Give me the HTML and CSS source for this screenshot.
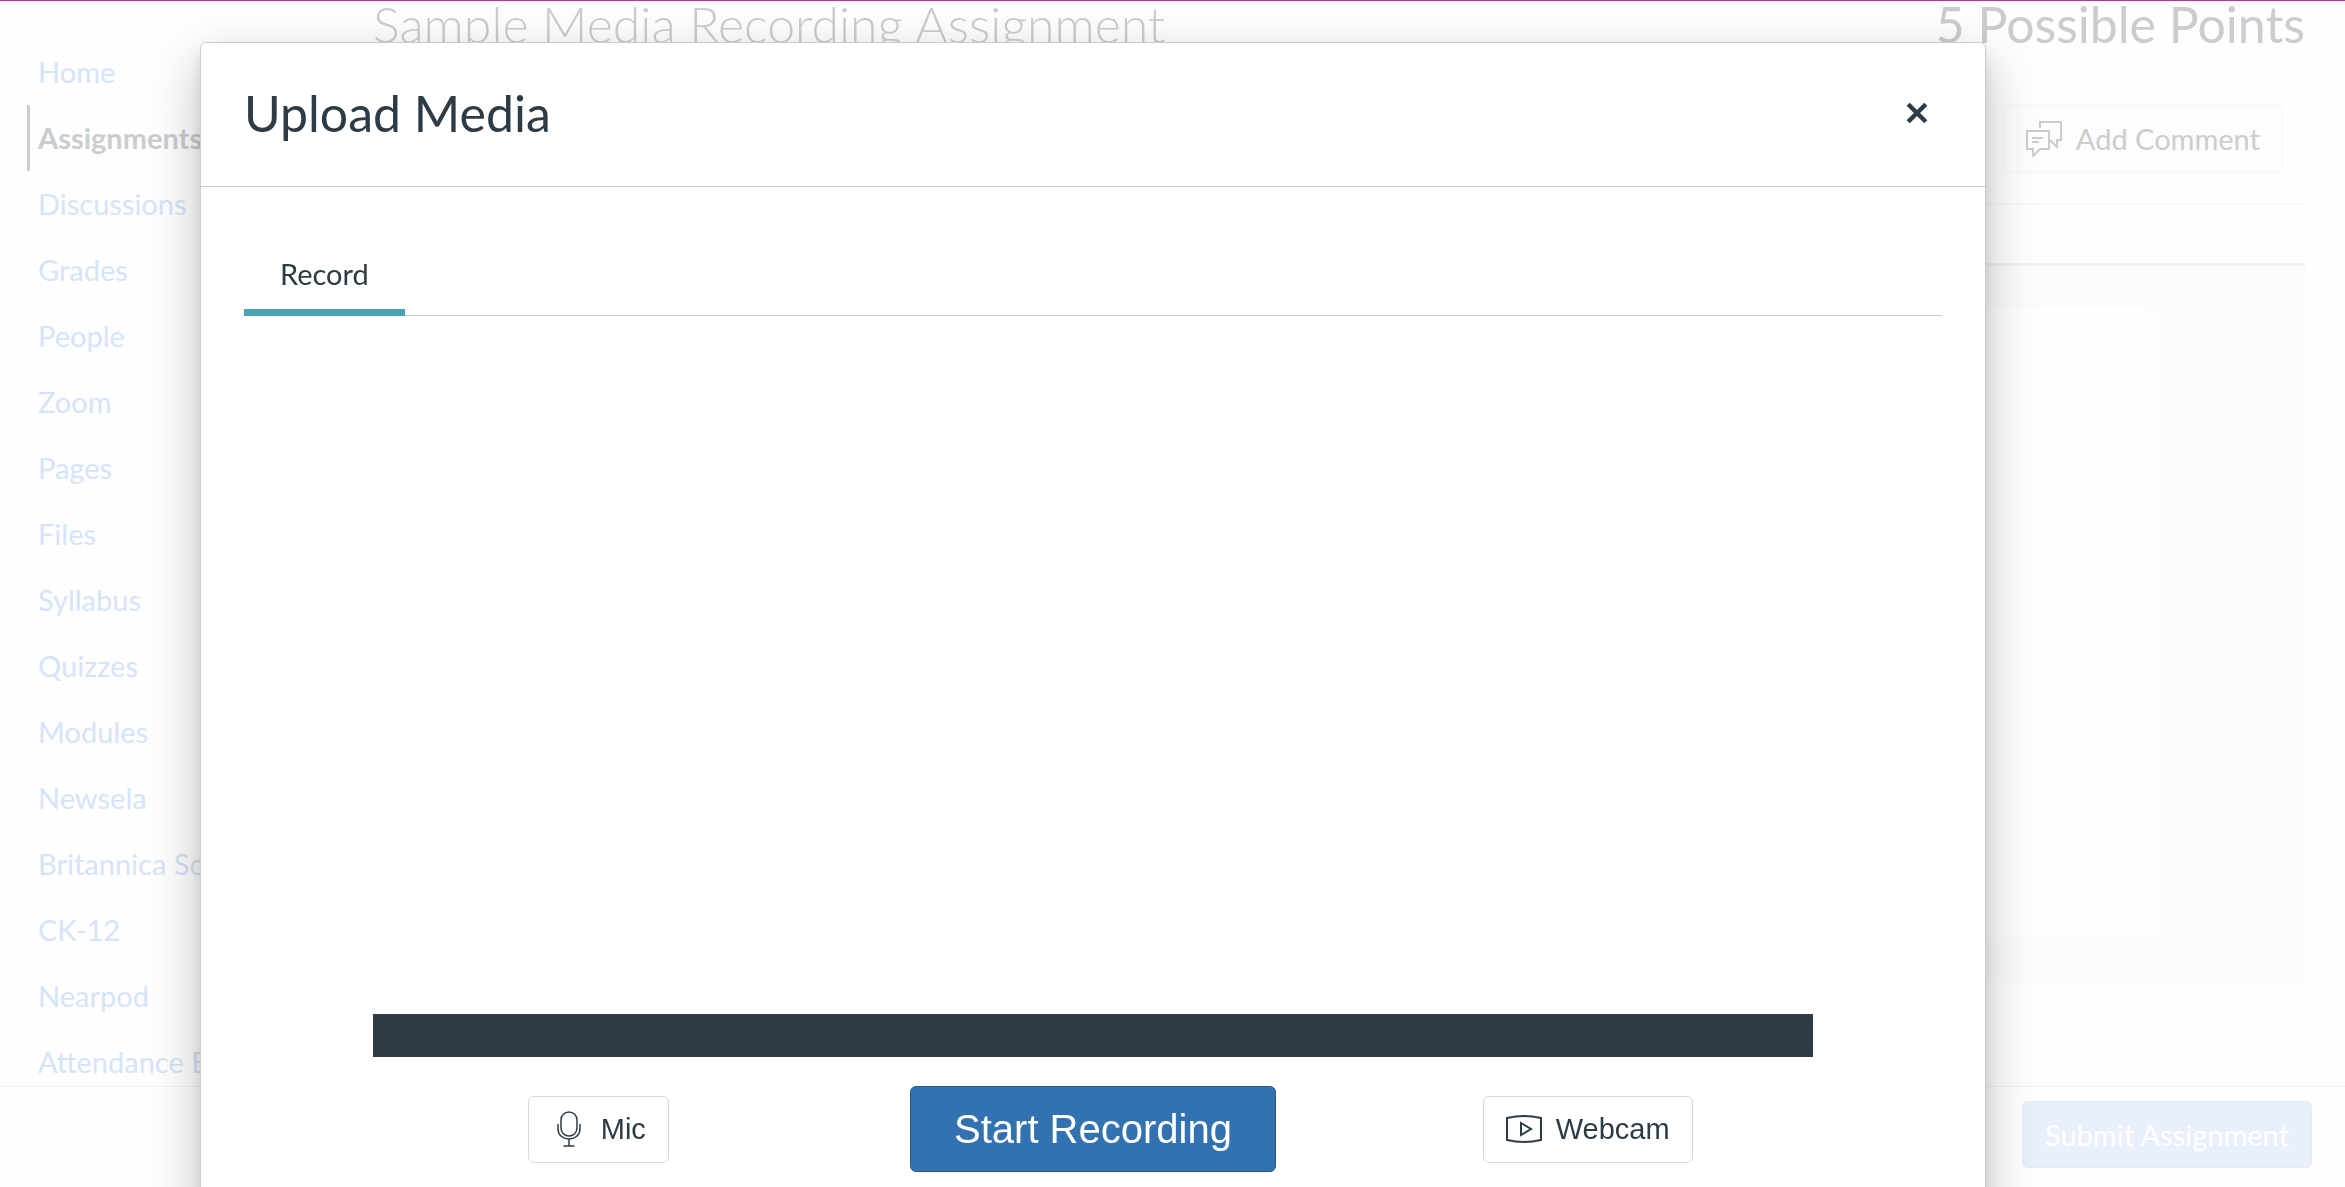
FILE: index.html
```html
<!DOCTYPE html>
<html lang="en">
<head>
    <meta charset="UTF-8">
    <title>Sample Media Recording Assignment</title>
    <link rel="stylesheet" href="styles.css">
</head>
<body>
<div class="page">
    <nav class="nav">
        <a href="#">Home</a>
        <a href="#" class="active">Assignments</a>
        <a href="#">Discussions</a>
        <a href="#">Grades</a>
        <a href="#">People</a>
        <a href="#">Zoom</a>
        <a href="#">Pages</a>
        <a href="#">Files</a>
        <a href="#">Syllabus</a>
        <a href="#">Quizzes</a>
        <a href="#">Modules</a>
        <a href="#">Newsela</a>
        <a href="#">Britannica School</a>
        <a href="#">CK-12</a>
        <a href="#">Nearpod</a>
        <a href="#">Attendance B</a>
    </nav>
    <main class="content">
        <div class="heading">
            <h1 class="title">Sample Media Recording Assignment</h1>
            <span class="points">5 Possible Points</span>
        </div>
        <div class="toolbar">
            <button type="button" class="comment">
                <svg width="36" height="36" viewBox="0 0 36 36" fill="none" stroke="currentColor" stroke-width="2">
                    <path d="M14 7V1h21v18h-4v7l-7-7"/>
                    <path d="M1 10h22v18h-9l-7 7v-7H1zM6 17h11M6 21h7"/>
                </svg>
                Add Comment
            </button>
        </div>
        <div class="tab-row"></div>
        <div class="attempt">
            <div class="attempt-card"></div>
        </div>
    </main>
</div>
<footer class="footer">
    <button type="button" class="submit">Submit Assignment</button>
</footer>

<div class="modal" role="dialog" aria-labelledby="modal-title">
    <header class="modal-header">
        <h2 class="modal-title" id="modal-title">Upload Media</h2>
        <button type="button" class="close" aria-label="Close">
            <svg width="22" height="22" viewBox="0 0 20 20" stroke="currentColor" stroke-width="4">
                <path d="M2 2l16 16M18 2L2 18"/>
            </svg>
        </button>
    </header>
    <div class="modal-body">
        <div class="tabs" role="tablist">
            <button type="button" class="tab" role="tab" aria-selected="true">Record</button>
        </div>
        <div class="recorder">
            <div class="preview"></div>
            <div class="meter"></div>
            <div class="controls">
                <button type="button" class="device">
                    <svg width="36" height="36" viewBox="0 0 36 36" fill="none" stroke="currentColor" stroke-width="1.5">
                        <rect x="10" y="1" width="16" height="24" rx="8"/>
                        <path d="M7 13v5c0 6 5 10 11 10s11-4 11-10v-5M18 28v7M12.500 35h11"/>
                    </svg>
                    Mic
                </button>
                <button type="button" class="record">Start Recording</button>
                <button type="button" class="device">
                    <svg width="36" height="36" viewBox="0 0 36 36" fill="none" stroke="currentColor" stroke-width="2">
                        <path d="M1 7q17-4 34 0v22q-17 4-34 0z"/>
                        <path d="M15 12l10 6-10 6z"/>
                    </svg>
                    Webcam
                </button>
            </div>
        </div>
    </div>
</div>
</body>
</html>
```
FILE: styles.css
```css
* {
    box-sizing: border-box;
}
body {
    margin: 0;
    height: 100vh;
    overflow: hidden;
    display: flex;
    flex-direction: column;
    border-top: 1px solid #b03a96;
    background: #fefefe;
    color: #cacdd0;
    font-family: Lato, sans-serif;
    font-size: 29px;
}
button {
    display: flex;
    align-items: center;
    justify-content: center;
    margin: 0;
    border-radius: 6px;
    font: inherit;
    color: inherit;
    white-space: nowrap;
}
svg {
    flex: none;
}

/* course page behind the dialog */
.page {
    flex: 1;
    min-height: 0;
    display: flex;
    padding-right: 40px;
}
.nav {
    flex: none;
    width: 373px;
    padding: 38px 0 0 27px;
}
.nav a {
    display: block;
    padding-left: 8px;
    border-left: 3px solid transparent;
    line-height: 66px;
    color: #d5e4f8;
    text-decoration: none;
    white-space: nowrap;
}
.nav .active {
    border-color: #cacdd0;
    color: #cacdd0;
    font-weight: bold;
}
.content {
    flex: 1;
}
.heading {
    display: flex;
    justify-content: space-between;
    font-size: 50px;
    line-height: 46px;
}
.title {
    margin: 0;
    font-size: 50px;
    font-weight: 300;
}
.toolbar {
    display: flex;
    justify-content: flex-end;
    padding: 58px 22px 32px 0;
    border-bottom: 1px solid #f4f4f4;
}
.comment {
    height: 67px;
    gap: 14px;
    padding: 0 22px;
    border: 1px solid #f6f6f6;
    background: #fdfdfd;
}
.tab-row {
    height: 61px;
    border-bottom: 3px solid #f1f1f1;
}
.attempt {
    padding: 43px 146px 44px;
    background: #fcfcfc;
}
.attempt-card {
    height: 629px;
    border-radius: 16px;
    background: #fefefe;
}
.footer {
    flex: none;
    display: flex;
    justify-content: flex-end;
    height: 101px;
    padding: 14px 33px 0 0;
    border-top: 1px solid #f1f1f2;
    background: #fefefe;
}
.submit {
    height: 67px;
    padding: 0 22px;
    border: 1px solid #e4ebf6;
    background: #e9f0fb;
    color: #fff;
}

/* upload dialog */
.modal {
    position: fixed;
    top: 42px;
    left: 200px;
    right: 359px;
    border: 1px solid #c7cdd1;
    border-radius: 6px;
    background: #fff;
    color: #2d3b45;
    box-shadow: 0 11px 12px rgba(0, 0, 0, .1), 0 18px 50px rgba(0, 0, 0, .25);
}
.modal-header {
    display: flex;
    align-items: center;
    justify-content: space-between;
    height: 144px;
    padding: 0 43px 3px;
    border-bottom: 1px solid #c7cdd1;
}
.modal-title {
    margin: 0;
    font-size: 50px;
    font-weight: normal;
}
.close {
    padding: 14px;
    border: 0;
    background: none;
}
.modal-body {
    padding: 56px 43px;
}
.tabs {
    display: flex;
    border-bottom: 1px solid #c7cdd1;
}
.tab {
    height: 73px;
    margin-bottom: -1px;
    padding: 0 36px 6px;
    border: 0;
    border-bottom: 7px solid #48a3b4;
    border-radius: 0;
    background: none;
}
.recorder {
    max-width: 1440px;
    margin: 0 auto;
    font-family: "Liberation Sans", Arial, sans-serif;
}
.preview {
    height: 698px;
}
.meter {
    height: 43px;
    background: #313b44;
}
.controls {
    display: grid;
    grid-template-columns: repeat(3, 1fr);
    gap: 44px;
    align-items: center;
    justify-items: center;
    padding-top: 29px;
}
.device {
    height: 67px;
    gap: 14px;
    padding: 0 22px;
    border: 1px solid #d7d9db;
    background: #fff;
}
.record {
    height: 86px;
    padding: 0 43px;
    border: 1px solid #28588a;
    background: #3272b0;
    color: #fff;
    font-size: 40px;
}
```
